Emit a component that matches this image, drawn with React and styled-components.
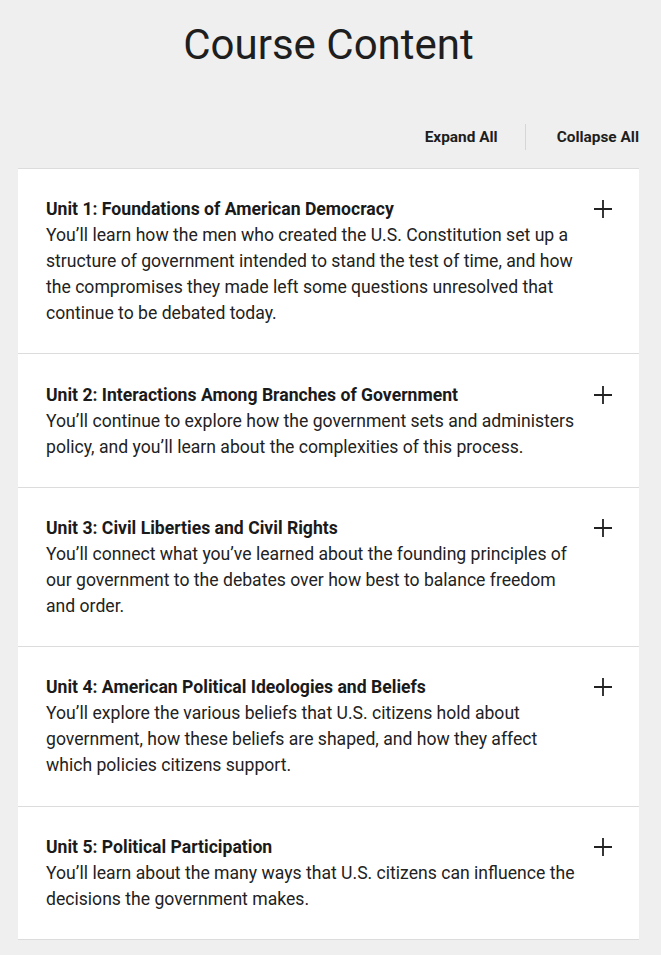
import React from "react";
import styled, { createGlobalStyle } from "styled-components";

const GlobalStyle = createGlobalStyle`
  body {
    margin: 0;
    background: #efefef;
    font-family: Roboto, "Liberation Sans", Arial, sans-serif;
    color: #1e1e1e;
  }
`

const Page = styled.div`
  padding: 19px 22px 16px 18px;
`

const Title = styled.h1`
  margin: 0;
  font-size: 42px;
  line-height: 52px;
  font-weight: 400;
  text-align: center;
  color: #1e1e1e;
`

const Toolbar = styled.div`
  display: flex;
  justify-content: flex-end;
  align-items: center;
  margin-top: 53px;
  height: 26px;
`

const ToolButton = styled.button`
  background: none;
  border: none;
  padding: 0;
  font-family: inherit;
  font-size: 15.4px;
  font-weight: 700;
  color: #1e1e1e;
  cursor: pointer;
`

const Divider = styled.span`
  width: 1px;
  height: 26px;
  background: #d6d6d6;
  margin: 0 31px 0 27px;
`

const List = styled.div`
  margin-top: 18px;
  background: #fff;
  border-top: 1px solid #dcdcdc;
`

const Item = styled.div`
  display: flex;
  justify-content: space-between;
  align-items: flex-start;
  padding: 27.2px 27px 27.2px 28px;
  border-bottom: 1px solid #dcdcdc;
`

const Texts = styled.div`
  width: 534px;
`

const UnitTitle = styled.h3`
  margin: 0;
  font-size: 17.6px;
  line-height: 26px;
  font-weight: 700;
  color: #1a1a1a;
`

const UnitText = styled.p`
  margin: 0;
  font-size: 17.6px;
  line-height: 26px;
  color: #222;
`

const PlusButton = styled.button`
  background: none;
  border: none;
  padding: 0;
  width: 18px;
  height: 26px;
  display: flex;
  align-items: center;
  justify-content: center;
  cursor: pointer;
`

const units = [
  {
    titulo: "Unit 1: Foundations of American Democracy",
    texto: "You’ll learn how the men who created the U.S. Constitution set up a structure of government intended to stand the test of time, and how the compromises they made left some questions unresolved that continue to be debated today."
  },
  {
    titulo: "Unit 2: Interactions Among Branches of Government",
    texto: "You’ll continue to explore how the government sets and administers policy, and you’ll learn about the complexities of this process."
  },
  {
    titulo: "Unit 3: Civil Liberties and Civil Rights",
    texto: "You’ll connect what you’ve learned about the founding principles of our government to the debates over how best to balance freedom and order."
  },
  {
    titulo: "Unit 4: American Political Ideologies and Beliefs",
    texto: "You’ll explore the various beliefs that U.S. citizens hold about government, how these beliefs are shaped, and how they affect which policies citizens support."
  },
  {
    titulo: "Unit 5: Political Participation",
    texto: "You’ll learn about the many ways that U.S. citizens can influence the decisions the government makes."
  }
]

const Plus = () => (
  <svg width="18" height="18" viewBox="0 0 18 18">
    <path d="M9 0v18M0 9h18" stroke="#222" strokeWidth="1.8" fill="none" />
  </svg>
)

export default function App() {
  return (
    <Page>
      <GlobalStyle />
      <Title>Course Content</Title>
      <Toolbar>
        <ToolButton>Expand All</ToolButton>
        <Divider />
        <ToolButton>Collapse All</ToolButton>
      </Toolbar>
      <List>
        {units.map((unit) => (
          <Item key={unit.titulo}>
            <Texts>
              <UnitTitle>{unit.titulo}</UnitTitle>
              <UnitText>{unit.texto}</UnitText>
            </Texts>
            <PlusButton aria-label="Expand">
              <Plus />
            </PlusButton>
          </Item>
        ))}
      </List>
    </Page>
  )
}
